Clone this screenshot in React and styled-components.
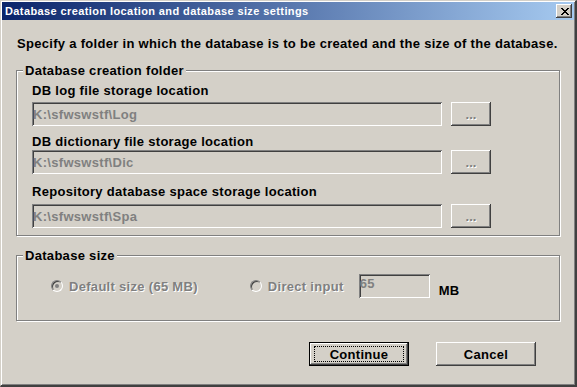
import React from "react";
import styled, { createGlobalStyle, css } from "styled-components";

const FACE = "#d4d0c8";
const SHADOW = "#808080";
const DARK = "#404040";

const GlobalStyle = createGlobalStyle`
  html, body {
    margin: 0;
    padding: 0;
    background: ${FACE};
  }
  * {
    box-sizing: border-box;
  }
`;

const raised = css`
  box-shadow: inset -1px -1px ${DARK}, inset 1px 1px #fff,
    inset -2px -2px ${SHADOW}, inset 2px 2px ${FACE};
`;

const sunken = css`
  box-shadow: inset 1px 1px ${SHADOW}, inset -1px -1px #fff,
    inset 2px 2px ${DARK}, inset -2px -2px ${FACE};
`;

const embossed = css`
  color: ${SHADOW};
  text-shadow: 1px 1px #fff;
`;

const Window = styled.div`
  width: 577px;
  height: 387px;
  display: flex;
  flex-direction: column;
  padding: 1px;
  background: ${FACE};
  border-style: solid;
  border-width: 1px 2px 2px 1px;
  border-color: ${FACE} ${DARK} ${DARK} ${FACE};
  box-shadow: inset 1px 1px #fff, inset -1px -1px ${SHADOW};
  font-family: "Liberation Sans", Arial, sans-serif;
  font-size: 13px;
  font-weight: bold;
  letter-spacing: 0.3px;
  color: #000;
`;

const TitleBar = styled.div`
  height: 18px;
  display: flex;
  align-items: center;
  justify-content: space-between;
  padding: 0 2px 0 3px;
  background: linear-gradient(to right, #0a246a, #a6caf0);
`;

const TitleText = styled.span`
  color: #fff;
  font-size: 11px;
  line-height: 14px;
  letter-spacing: 0.4px;
  white-space: nowrap;
`;

const CloseButton = styled.button`
  width: 16px;
  height: 14px;
  padding: 0 0 0 1px;
  border: none;
  background: ${FACE};
  display: flex;
  align-items: center;
  justify-content: center;
  ${raised};
`;

const Body = styled.div`
  flex: 1;
  display: flex;
  flex-direction: column;
  padding: 0 14px;
`;

const Intro = styled.p`
  margin: 16px 0 0 1px;
  line-height: 15px;
  white-space: nowrap;
`;

const Group = styled.div`
  position: relative;
  width: 544px;
  margin-top: ${(p) => p.$top}px;
  padding: 0 0 ${(p) => p.$bottom}px ${(p) => p.$left}px;
  border: 1px solid ${SHADOW};
  box-shadow: inset 1px 1px #fff, 1px 1px #fff;
`;

const GroupCaption = styled.span`
  position: absolute;
  left: 6px;
  top: -8px;
  padding: 0 2px;
  line-height: 15px;
  background: ${FACE};
`;

const FieldLabel = styled.div`
  margin-top: ${(p) => p.$top}px;
  line-height: 15px;
`;

const FieldRow = styled.div`
  display: flex;
  gap: 9px;
  margin-top: ${(p) => p.$top}px;
`;

const PathField = styled.input`
  width: 410px;
  height: 24px;
  padding: 0 0 0 1px;
  border: none;
  outline: none;
  background: ${FACE};
  font: inherit;
  letter-spacing: inherit;
  color: ${SHADOW};
  -webkit-text-fill-color: ${SHADOW};
  opacity: 1;
  ${sunken};
`;

const BrowseButton = styled.button`
  width: 40px;
  height: 24px;
  padding: 0;
  border: none;
  background: ${FACE};
  font: inherit;
  line-height: 15px;
  ${embossed};
  ${raised};
`;

const RadioRow = styled.div`
  display: flex;
  align-items: center;
  margin-top: 18px;
  height: 24px;
`;

const RadioOption = styled.label`
  display: flex;
  align-items: center;
  gap: 6px;
  margin-right: ${(p) => p.$gap}px;
  ${embossed};
  line-height: 15px;
`;

const RadioMark = styled.span`
  width: 12px;
  height: 12px;
  border-radius: 50%;
  background: ${FACE};
  border: 1px solid;
  border-color: ${SHADOW} #fff #fff ${SHADOW};
  box-shadow: inset 1px 1px ${DARK};
  display: flex;
  align-items: center;
  justify-content: center;

  &::after {
    content: "";
    width: 4px;
    height: 4px;
    border-radius: 50%;
    background: ${(p) => (p.$checked ? SHADOW : "transparent")};
  }
`;

const SizeField = styled.input`
  width: 71px;
  height: 24px;
  padding: 0 0 6px 1px;
  border: none;
  outline: none;
  background: ${FACE};
  font: inherit;
  letter-spacing: inherit;
  color: ${SHADOW};
  -webkit-text-fill-color: ${SHADOW};
  opacity: 1;
  ${sunken};
`;

const Unit = styled.span`
  align-self: flex-end;
  margin-left: 9px;
  line-height: 15px;
`;

const ButtonBar = styled.div`
  display: flex;
  justify-content: flex-end;
  gap: 27px;
  margin-top: 21px;
  padding-right: 24px;
`;

const DialogButton = styled.button`
  width: 100px;
  height: 24px;
  padding: ${(p) => (p.$default ? "3px 4px" : "0")};
  display: flex;
  align-items: stretch;
  justify-content: center;
  background: ${FACE};
  font: inherit;
  letter-spacing: inherit;
  color: #000;
  border: ${(p) => (p.$default ? "1px solid #000" : "none")};
  ${raised};
`;

const ButtonText = styled.span`
  flex: 1;
  display: flex;
  align-items: center;
  justify-content: center;
  border: 1px ${(p) => (p.$focused ? "dotted #000" : "solid transparent")};
`;

function CloseGlyph() {
  const rows = [
    [0, 6],
    [1, 5],
    [2, 4],
    [3, 3],
    [2, 4],
    [1, 5],
    [0, 6],
  ];
  const d = rows
    .map(([a, b], y) =>
      a === b ? `M${a} ${y}h2v1h-2z` : `M${a} ${y}h2v1h-2zM${b} ${y}h2v1h-2z`
    )
    .join("");
  return (
    <svg width="8" height="7" viewBox="0 0 8 7" shapeRendering="crispEdges">
      <path d={d} fill="#000" />
    </svg>
  );
}

const locations = [
  { label: "DB log file storage location", path: "K:\\sfwswstf\\Log", labelTop: 12, fieldTop: 4 },
  { label: "DB dictionary file storage location", path: "K:\\sfwswstf\\Dic", labelTop: 8, fieldTop: 1 },
  { label: "Repository database space storage location", path: "K:\\sfwswstf\\Spa", labelTop: 10, fieldTop: 5 },
];

export default function App() {
  return (
    <>
      <GlobalStyle />
      <Window>
        <TitleBar>
          <TitleText>Database creation location and database size settings</TitleText>
          <CloseButton aria-label="Close">
            <CloseGlyph />
          </CloseButton>
        </TitleBar>
        <Body>
          <Intro>
            Specify a folder in which the database is to be created and the size of the database.
          </Intro>
          <Group $top={19} $left={15} $bottom={7}>
            <GroupCaption>Database creation folder</GroupCaption>
            {locations.map((loc) => (
              <React.Fragment key={loc.label}>
                <FieldLabel $top={loc.labelTop}>{loc.label}</FieldLabel>
                <FieldRow $top={loc.fieldTop}>
                  <PathField value={loc.path} readOnly disabled />
                  <BrowseButton disabled>...</BrowseButton>
                </FieldRow>
              </React.Fragment>
            ))}
          </Group>
          <Group $top={19} $left={34} $bottom={22}>
            <GroupCaption>Database size</GroupCaption>
            <RadioRow>
              <RadioOption $gap={52}>
                <RadioMark $checked />
                Default size (65 MB)
              </RadioOption>
              <RadioOption $gap={15}>
                <RadioMark />
                Direct input
              </RadioOption>
              <SizeField value="65" readOnly disabled />
              <Unit>MB</Unit>
            </RadioRow>
          </Group>
          <ButtonBar>
            <DialogButton $default>
              <ButtonText $focused>Continue</ButtonText>
            </DialogButton>
            <DialogButton>
              <ButtonText>Cancel</ButtonText>
            </DialogButton>
          </ButtonBar>
        </Body>
      </Window>
    </>
  );
}
